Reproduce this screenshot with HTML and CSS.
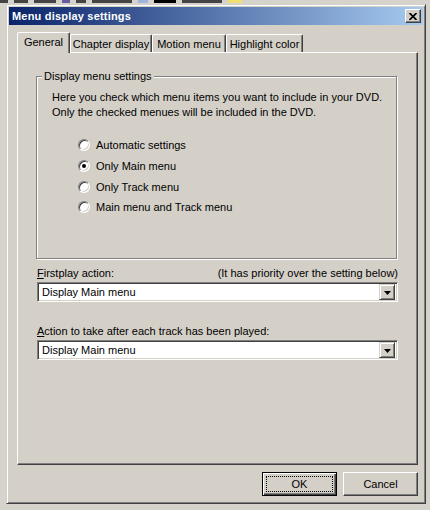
FILE: index.html
```html
<!DOCTYPE html>
<html>
<head>
<meta charset="utf-8">
<link rel="stylesheet" href="styles.css">
</head>
<body>
<div class="screen">
  <div class="bg-top">
    <span class="blk c-dark w8"></span>
    <span class="blk c-dark w14"></span>
    <span class="blk c-dark w22"></span>
    <span class="blk c-purple w8"></span>
    <span class="blk c-dark w10"></span>
    <span class="blk c-dark w40"></span>
    <span class="blk c-blue w10"></span>
    <span class="blk c-black w22"></span>
    <span class="blk c-dark w40"></span>
    <span class="blk c-yellow w14"></span>
  </div>
  <div class="window">
    <div class="titlebar">
      <span class="title">Menu display settings</span>
      <span class="close"><svg width="8" height="7" viewBox="0 0 8 7"><path d="M0.5 0 L7.5 7 M7.5 0 L0.5 7" stroke="#000" stroke-width="1.7" fill="none"/></svg></span>
    </div>
    <div class="content">
      <div class="tabs">
        <div class="tab active t1">General</div>
        <div class="tab t2">Chapter display</div>
        <div class="tab t3">Motion menu</div>
        <div class="tab t4">Highlight color</div>
      </div>
      <div class="panel">
        <div class="group">
          <div class="group-label">Display menu settings</div>
          <p class="desc">Here you check which menu items you want to include in your DVD.<br>Only the checked menues will be included in the DVD.</p>
          <div class="radios">
            <div class="radio-row"><span class="radio"></span><span>Automatic settings</span></div>
            <div class="radio-row"><span class="radio checked"></span><span>Only Main menu</span></div>
            <div class="radio-row"><span class="radio"></span><span>Only Track menu</span></div>
            <div class="radio-row"><span class="radio"></span><span>Main menu and Track menu</span></div>
          </div>
        </div>
        <div class="field-label first"><span><u>F</u>irstplay action:</span><span>(It has priority over the setting below)</span></div>
        <div class="combo"><span class="combo-text">Display Main menu</span><span class="combo-btn"><svg width="7" height="4" viewBox="0 0 7 4"><path d="M0 0 H7 L3.5 4 Z" fill="#000"/></svg></span></div>
        <div class="field-label second"><span><u>A</u>ction to take after each track has been played:</span></div>
        <div class="combo"><span class="combo-text">Display Main menu</span><span class="combo-btn"><svg width="7" height="4" viewBox="0 0 7 4"><path d="M0 0 H7 L3.5 4 Z" fill="#000"/></svg></span></div>
      </div>
      <div class="buttons">
        <div class="btn default"><span class="focus">OK</span></div>
        <div class="btn">Cancel</div>
      </div>
    </div>
  </div>
</div>
</body>
</html>
```
FILE: styles.css
```css
html, body {
  margin: 0;
  padding: 0;
}
body {
  background: #d6d3cc;
  font-family: "Liberation Sans", Arial, sans-serif;
  font-size: 11px;
  color: #000;
  width: 430px;
  height: 510px;
  overflow: hidden;
}
.screen {
  padding-left: 6px;
}
.bg-top {
  height: 4px;
  overflow: hidden;
  display: flex;
  align-items: flex-start;
  gap: 6px;
  margin-left: -6px;
}
.blk { display: block; height: 3px; }
.w8 { width: 8px; } .w10 { width: 10px; } .w14 { width: 14px; } .w22 { width: 22px; }
.w40 { width: 40px; }
.c-purple { background: #6a5aa0; }
.c-dark { background: #444; }
.c-blue { background: #a0b4e0; }
.c-black { background: #000; }
.c-yellow { background: #f0e070; }

.window {
  width: 420px;
  height: 500px;
  box-sizing: border-box;
  background: #d4d0c8;
  border: 1px solid;
  border-color: #d4d0c8 #404040 #404040 #d4d0c8;
  box-shadow: inset 1px 1px #fff, inset -1px -1px #808080;
  padding: 2px;
  display: flex;
  flex-direction: column;
}
.titlebar {
  height: 18px;
  background: linear-gradient(to right, #0a246a, #a6caf0);
  display: flex;
  align-items: center;
  justify-content: space-between;
  padding: 0 2px 0 3px;
}
.title {
  color: #fff;
  font-weight: bold;
  font-size: 11px;
  letter-spacing: 0.2px;
}
.close {
  width: 16px;
  height: 14px;
  box-sizing: border-box;
  background: #d4d0c8;
  border: 1px solid;
  border-color: #fff #404040 #404040 #fff;
  box-shadow: inset -1px -1px #808080;
  display: flex;
  align-items: center;
  justify-content: center;
  padding-right: 1px;
}
.content {
  padding: 7px 6px 0 8px;
  display: flex;
  flex-direction: column;
}
.tabs {
  display: flex;
  align-items: flex-end;
  height: 20px;
}
.tab {
  height: 18px;
  box-sizing: border-box;
  border: 1px solid;
  border-bottom: none;
  border-color: #fff #404040 transparent #fff;
  box-shadow: inset -1px 0 #808080;
  border-radius: 2px 2px 0 0;
  display: flex;
  align-items: center;
  justify-content: center;
  padding-top: 1px;
}
.tab.active {
  height: 21px;
  margin-bottom: -1px;
  position: relative;
  z-index: 1;
  background: #d4d0c8;
  padding-top: 0;
  padding-bottom: 2px;
}
.t1 { width: 53px; }
.t2 { width: 82px; }
.t3 { width: 74px; }
.t4 { width: 77px; }

.panel {
  width: 401px;
  height: 413px;
  box-sizing: border-box;
  border: 1px solid;
  border-color: #fff #404040 #404040 #fff;
  box-shadow: inset -1px -1px #808080;
  padding: 23px 19px 0 18px;
  display: flex;
  flex-direction: column;
}
.group {
  height: 183px;
  box-sizing: border-box;
  width: 361px;
  border: 1px solid #808080;
  box-shadow: inset 1px 1px #fff, 1px 1px #fff;
  display: flex;
  flex-direction: column;
}
.group-label {
  align-self: flex-start;
  background: #d4d0c8;
  margin: -7px 0 0 5px;
  padding: 0 2px;
  line-height: 13px;
}
.desc {
  margin: 7px 0 0 15px;
  line-height: 15px;
}
.radios {
  margin: 15px 0 0 41px;
  display: flex;
  flex-direction: column;
}
.radio-row {
  height: 20.7px;
  display: flex;
  align-items: center;
  gap: 6px;
}
.radio {
  width: 12px;
  height: 12px;
  box-sizing: border-box;
  border-radius: 50%;
  border: 1px solid;
  border-color: #808080 #fff #fff #808080;
  box-shadow: inset 1px 1px #404040, inset -1px -1px #d4d0c8;
  background: #fff;
  display: flex;
  align-items: center;
  justify-content: center;
}
.radio.checked::after {
  content: "";
  width: 4px;
  height: 4px;
  border-radius: 50%;
  background: #000;
}
.field-label {
  display: flex;
  justify-content: space-between;
  line-height: 13px;
  padding-left: 1px;
}
.field-label.first { margin-top: 8px; }
.field-label.second { margin-top: 23px; }
.combo {
  margin-top: 2px;
  width: 361px;
  margin-left: 1px;
  height: 20px;
  box-sizing: border-box;
  background: #fff;
  border: 1px solid;
  border-color: #808080 #fff #fff #808080;
  box-shadow: inset 1px 1px #404040, inset -1px -1px #d4d0c8;
  display: flex;
  align-items: center;
  justify-content: space-between;
  padding: 2px;
}
.combo-text {
  padding-left: 2px;
}
.combo-btn {
  width: 16px;
  height: 16px;
  box-sizing: border-box;
  background: #d4d0c8;
  border: 1px solid;
  border-color: #d4d0c8 #404040 #404040 #d4d0c8;
  box-shadow: inset 1px 1px #fff, inset -1px -1px #808080;
  display: flex;
  align-items: center;
  justify-content: center;
  padding-top: 1px;
}
.buttons {
  display: flex;
  justify-content: flex-end;
  gap: 6px;
  margin-top: 7px;
  width: 401px;
}
.btn {
  width: 75px;
  height: 24px;
  box-sizing: border-box;
  border: 1px solid;
  border-color: #fff #404040 #404040 #fff;
  box-shadow: inset -1px -1px #808080;
  display: flex;
  align-items: center;
  justify-content: center;
}
.btn.default {
  border: 1px solid #000;
  box-shadow: inset 1px 1px #fff, inset -1px -1px #404040, inset -2px -2px #808080;
  padding: 3px;
}
.focus {
  flex: 1;
  align-self: stretch;
  border: 1px dotted #000;
  display: flex;
  align-items: center;
  justify-content: center;
}
```
